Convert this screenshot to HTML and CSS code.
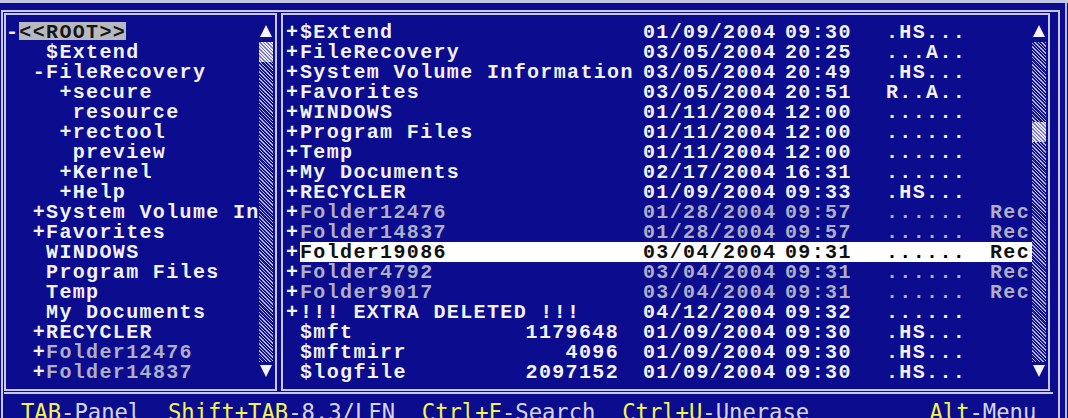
FILE: index.html
```html
<!DOCTYPE html>
<html lang="en">
<head>
<meta charset="utf-8">
<title>Undelete - Folder view</title>
<link rel="stylesheet" href="styles.css">
</head>
<body>
<div class="screen">
  <div class="window-top"></div>
  <div class="workspace">
    <div class="frame">
      <div class="panels">
        <section class="panel tree-panel">
          <ul class="tree">
            <li class="node">-<span class="root">&lt;&lt;ROOT&gt;&gt;</span></li>
            <li class="node">   $Extend</li>
            <li class="node">  -FileRecovery</li>
            <li class="node">    +secure</li>
            <li class="node">     resource</li>
            <li class="node">    +rectool</li>
            <li class="node">     preview</li>
            <li class="node">    +Kernel</li>
            <li class="node">    +Help</li>
            <li class="node">  +System Volume In</li>
            <li class="node">  +Favorites</li>
            <li class="node">   WINDOWS</li>
            <li class="node">   Program Files</li>
            <li class="node">   Temp</li>
            <li class="node">   My Documents</li>
            <li class="node">  +RECYCLER</li>
            <li class="node">  +<span class="gone">Folder12476</span></li>
            <li class="node">  +<span class="gone">Folder14837</span></li>
          </ul>
          <div class="scrollbar">
            <svg class="arrow" viewBox="0 0 14 20" width="14" height="20"><polygon points="1,15 7,3 13,15"/></svg>
            <div class="track"><div class="thumb"></div></div>
            <svg class="arrow" viewBox="0 0 14 20" width="14" height="20"><polygon points="1,3 13,3 7,15"/></svg>
          </div>
        </section>

        <section class="panel list-panel">
          <div class="list">
            <div class="file"><span class="mark">+</span><span class="cells"><span class="name">$Extend<span class="size"></span></span><span class="date">01/09/2004</span><span class="time">09:30</span><span class="attr">.HS...</span><span class="rec"></span></span></div>
            <div class="file"><span class="mark">+</span><span class="cells"><span class="name">FileRecovery<span class="size"></span></span><span class="date">03/05/2004</span><span class="time">20:25</span><span class="attr">...A..</span><span class="rec"></span></span></div>
            <div class="file"><span class="mark">+</span><span class="cells"><span class="name">System Volume Information<span class="size"></span></span><span class="date">03/05/2004</span><span class="time">20:49</span><span class="attr">.HS...</span><span class="rec"></span></span></div>
            <div class="file"><span class="mark">+</span><span class="cells"><span class="name">Favorites<span class="size"></span></span><span class="date">03/05/2004</span><span class="time">20:51</span><span class="attr">R..A..</span><span class="rec"></span></span></div>
            <div class="file"><span class="mark">+</span><span class="cells"><span class="name">WINDOWS<span class="size"></span></span><span class="date">01/11/2004</span><span class="time">12:00</span><span class="attr">......</span><span class="rec"></span></span></div>
            <div class="file"><span class="mark">+</span><span class="cells"><span class="name">Program Files<span class="size"></span></span><span class="date">01/11/2004</span><span class="time">12:00</span><span class="attr">......</span><span class="rec"></span></span></div>
            <div class="file"><span class="mark">+</span><span class="cells"><span class="name">Temp<span class="size"></span></span><span class="date">01/11/2004</span><span class="time">12:00</span><span class="attr">......</span><span class="rec"></span></span></div>
            <div class="file"><span class="mark">+</span><span class="cells"><span class="name">My Documents<span class="size"></span></span><span class="date">02/17/2004</span><span class="time">16:31</span><span class="attr">......</span><span class="rec"></span></span></div>
            <div class="file"><span class="mark">+</span><span class="cells"><span class="name">RECYCLER<span class="size"></span></span><span class="date">01/09/2004</span><span class="time">09:33</span><span class="attr">.HS...</span><span class="rec"></span></span></div>
            <div class="file deleted"><span class="mark">+</span><span class="cells"><span class="name">Folder12476<span class="size"></span></span><span class="date">01/28/2004</span><span class="time">09:57</span><span class="attr">......</span><span class="rec">Rec</span></span></div>
            <div class="file deleted"><span class="mark">+</span><span class="cells"><span class="name">Folder14837<span class="size"></span></span><span class="date">01/28/2004</span><span class="time">09:57</span><span class="attr">......</span><span class="rec">Rec</span></span></div>
            <div class="file deleted current"><span class="mark">+</span><span class="cells"><span class="name">Folder19086<span class="size"></span></span><span class="date">03/04/2004</span><span class="time">09:31</span><span class="attr">......</span><span class="rec">Rec</span></span></div>
            <div class="file deleted"><span class="mark">+</span><span class="cells"><span class="name">Folder4792<span class="size"></span></span><span class="date">03/04/2004</span><span class="time">09:31</span><span class="attr">......</span><span class="rec">Rec</span></span></div>
            <div class="file deleted"><span class="mark">+</span><span class="cells"><span class="name">Folder9017<span class="size"></span></span><span class="date">03/04/2004</span><span class="time">09:31</span><span class="attr">......</span><span class="rec">Rec</span></span></div>
            <div class="file"><span class="mark">+</span><span class="cells"><span class="name">!!! EXTRA DELETED !!!<span class="size"></span></span><span class="date">04/12/2004</span><span class="time">09:32</span><span class="attr">......</span><span class="rec"></span></span></div>
            <div class="file"><span class="mark"> </span><span class="cells"><span class="name">$mft<span class="size">1179648</span></span><span class="date">01/09/2004</span><span class="time">09:30</span><span class="attr">.HS...</span><span class="rec"></span></span></div>
            <div class="file"><span class="mark"> </span><span class="cells"><span class="name">$mftmirr<span class="size">4096</span></span><span class="date">01/09/2004</span><span class="time">09:30</span><span class="attr">.HS...</span><span class="rec"></span></span></div>
            <div class="file"><span class="mark"> </span><span class="cells"><span class="name">$logfile<span class="size">2097152</span></span><span class="date">01/09/2004</span><span class="time">09:30</span><span class="attr">.HS...</span><span class="rec"></span></span></div>
          </div>
          <div class="scrollbar">
            <svg class="arrow" viewBox="0 0 14 20" width="14" height="20"><polygon points="1,15 7,3 13,15"/></svg>
            <div class="track"><div class="thumb at-row-5"></div></div>
            <svg class="arrow" viewBox="0 0 14 20" width="14" height="20"><polygon points="1,3 13,3 7,15"/></svg>
          </div>
        </section>
      </div>
      <div class="status"><span class="key">TAB</span>-Panel  <span class="key">Shift+TAB</span>-8.3/LFN  <span class="key">Ctrl+F</span>-Search  <span class="key">Ctrl+U</span>-Unerase         <span class="key">Alt</span>-Menu</div>
    </div>
    <div class="window-edge"></div>
  </div>
</div>
</body>
</html>
```

FILE: styles.css
```css
/* Text-mode file recovery screen: blue background, light frame lines */
html, body {
  margin: 0;
  padding: 0;
}

body {
  background: #0c0c8e;
  color: #f2f2ff;
  font-family: "Liberation Mono", "DejaVu Sans Mono", monospace;
  font-weight: bold;
  font-size: 20px;
  letter-spacing: 1.35px;
}

.screen {
  width: 1068px;
  height: 418px;
  overflow: hidden;
}

.window-top {
  height: 3px;
  background: #c4c4e4;
}

.workspace {
  display: flex;
  align-items: stretch;
  height: 415px;
}

/* outer double frame: outer line belongs to .frame, inner line to each panel */
.frame {
  width: 1049px;
  margin: 7px 0 0 1px;
  border: 2px solid #c8c8ec;
  border-bottom: none;
  padding: 1px 5px 0 1px;
}

.window-edge {
  width: 2px;
  margin-left: 5px;
  background: #b8b8dc;
}

.panels {
  display: flex;
  gap: 4px;
}

.panel {
  display: flex;
  border: 2px solid #c8c8ec;
  padding-top: 7px;
  padding-bottom: 7px;
}

.tree-panel {
  width: 267px;
  padding-right: 2px;
}

.list-panel {
  width: 760px;
  padding-left: 3px;
  padding-right: 2px;
}

/* directory tree */
.tree {
  list-style: none;
  margin: 0;
  padding: 0;
  width: 253px;
  overflow: hidden;
}

.node {
  height: 20px;
  line-height: 22px;
  white-space: pre;
}

.root {
  display: inline-block;
  height: 18px;
  line-height: 22px;
  vertical-align: top;
  background: #b8b8c0;
  color: #161616;
}

.gone {
  color: #aeaec6;
}

/* file list */
.list {
  width: 746px;
}

.file {
  display: flex;
  height: 20px;
  line-height: 22px;
  white-space: pre;
}

.mark {
  width: 14px;
  flex: none;
}

.cells {
  display: flex;
  flex: none;
  height: 20px;
}

.name {
  width: 343px;
  padding-right: 24px;
  box-sizing: border-box;
  display: flex;
  justify-content: space-between;
}

.date { width: 142px; }
.time { width: 101px; }
.attr { width: 104px; }
.rec  { width: 42px; }

.file.deleted .cells {
  color: #aeaec6;
}

.file.current .cells {
  background: #ffffff;
  color: #111111;
}

/* scroll bars */
.scrollbar {
  width: 14px;
  flex: none;
  display: flex;
  flex-direction: column;
}

.arrow {
  display: block;
  fill: #f4f4ff;
}

.track {
  flex: 1;
  background: repeating-linear-gradient(45deg, #b4b4de 0 1px, #14148e 1px 2.5px);
}

.thumb {
  height: 20px;
  background: repeating-linear-gradient(45deg, #e4e4f4 0 1.5px, #7c7cb8 1.5px 2.5px);
}

.thumb.at-row-5 {
  margin-top: 80px;
}

/* key hint line */
.status {
  margin-top: 1px;
  border-top: 2px solid #c8c8ec;
  padding: 5px 0 0 17px;
  height: 26px;
  line-height: 26px;
  white-space: pre;
  font-family: "DejaVu Sans Mono", "Liberation Mono", monospace;
  font-weight: normal;
  font-size: 22.2px;
  letter-spacing: 0;
  color: #d4d4ee;
}

.key {
  color: #f4f450;
}
```
